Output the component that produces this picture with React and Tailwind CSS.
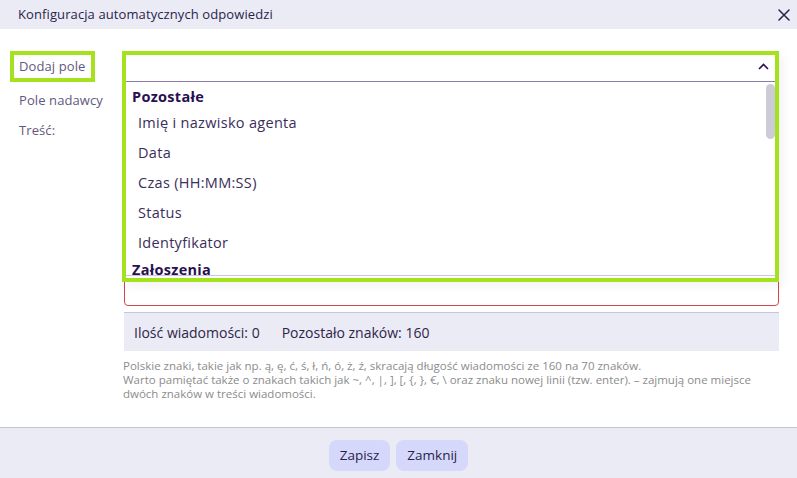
import React from "react";

const items = ["Imię i nazwisko agenta", "Data", "Czas (HH:MM:SS)", "Status", "Identyfikator"];

export default function App() {
  return (
    <div className="w-[797px] h-[478px] flex flex-col bg-white overflow-hidden" style={{ fontFamily: '"Open Sans", "Noto Sans", sans-serif' }}>
      <div className="h-[29px] shrink-0 bg-[#ebebf6] flex items-center justify-between pl-[18px] pr-[7px]">
        <span className="text-[13px] tracking-[0.1px] text-[#2a1f4a]">Konfiguracja automatycznych odpowiedzi</span>
        <svg width="12" height="12" viewBox="0 0 12 12" className="text-[#2a1f4a]">
          <path d="M1 1 L11 11 M11 1 L1 11" stroke="currentColor" strokeWidth="1.5" strokeLinecap="round" />
        </svg>
      </div>

      <div className="relative flex-1 flex pt-[22px] pl-[10px]">
        <div className="w-[114px] shrink-0 flex flex-col text-[13px] tracking-[0.1px] text-[#62587e]">
          <div className="h-[31px] w-[85px] border-4 border-[#a3e21c] flex items-center pl-[5px]">Dodaj pole</div>
          <div className="h-[38px] flex items-center pl-[9px]">Pole nadawcy</div>
          <div className="h-[21px] flex items-center pl-[9px]">Treść:</div>
        </div>
        <div className="w-[655px] flex flex-col">
          <div className="h-[31px]" />
          <div className="h-[28px] mt-[5px]" />
          <div className="h-[187px] mt-[4px] border border-[#d04848] rounded-b-[4px]" />
          <div className="mt-[6px] h-[39px] bg-[#ebebf6] border-t border-[#c5c5dd] flex items-center pl-[10px] gap-[22px] text-[14px] text-[#2f2448]">
            <span>Ilość wiadomości: 0</span>
            <span>Pozostało znaków: 160</span>
          </div>
          <div className="mt-[8px] text-[11.5px] leading-[14px] text-[#8c8c8c] -ml-[1px]">
            <p>Polskie znaki, takie jak np. ą, ę, ć, ś, ł, ń, ó, ż, ź, skracają długość wiadomości ze 160 na 70 znaków.</p>
            <p>Warto pamiętać także o znakach takich jak ~, ^, |, ], [, {"{"}, {"}"}, €, \ oraz znaku nowej linii (tzw. enter). – zajmują one miejsce</p>
            <p>dwóch znaków w treści wiadomości.</p>
          </div>
        </div>

        <div className="absolute left-[122px] top-[22px] w-[657px] h-[231px] border-4 border-[#a3e21c] bg-white flex flex-col shadow-[4px_4px_10px_rgba(0,0,0,0.05)]">
          <div className="h-[27px] shrink-0 border-b border-[#8b7ba8] flex items-center justify-end pr-[6px] pb-[4px]">
            <svg width="11" height="7" viewBox="0 0 11 7">
              <path d="M1 6 L5.5 1.5 L10 6" stroke="#2a1050" strokeWidth="1.6" fill="none" />
            </svg>
          </div>
          <div className="relative flex-1 overflow-hidden border-b border-[#c8c8dc] mb-[2px]">
            <div className="pl-[6px] pt-[6px]">
              <div className="h-[17px] flex items-center text-[14.5px] tracking-[0.3px] font-bold text-[#2a1050]">Pozostałe</div>
              <div className="mt-[3px]">
                {items.map((t) => (
                  <div key={t} className="h-[30px] flex items-center pl-[6px] text-[14.5px] tracking-[0.3px] text-[#3a2e5a]">{t}</div>
                ))}
              </div>
              <div className="h-[17px] mt-[3px] flex items-center text-[14.5px] tracking-[0.3px] font-bold text-[#2a1050]">Załoszenia</div>
            </div>
            <div className="absolute right-0 top-[2px] w-[9px] h-[55px] rounded-[5px] bg-[#cccbd8]" />
          </div>
        </div>
      </div>

      <div className="h-[51px] shrink-0 bg-[#ebebf6] border-t border-[#c5c5d8] flex items-center justify-center gap-[6px] pt-[4px]">
        <button className="h-[31px] px-[11px] rounded-[8px] bg-[#d6d8fb] text-[13.5px] text-[#2a1f4a]">Zapisz</button>
        <button className="h-[31px] px-[11px] rounded-[8px] bg-[#d6d8fb] text-[13.5px] text-[#2a1f4a]">Zamknij</button>
      </div>
    </div>
  );
}
